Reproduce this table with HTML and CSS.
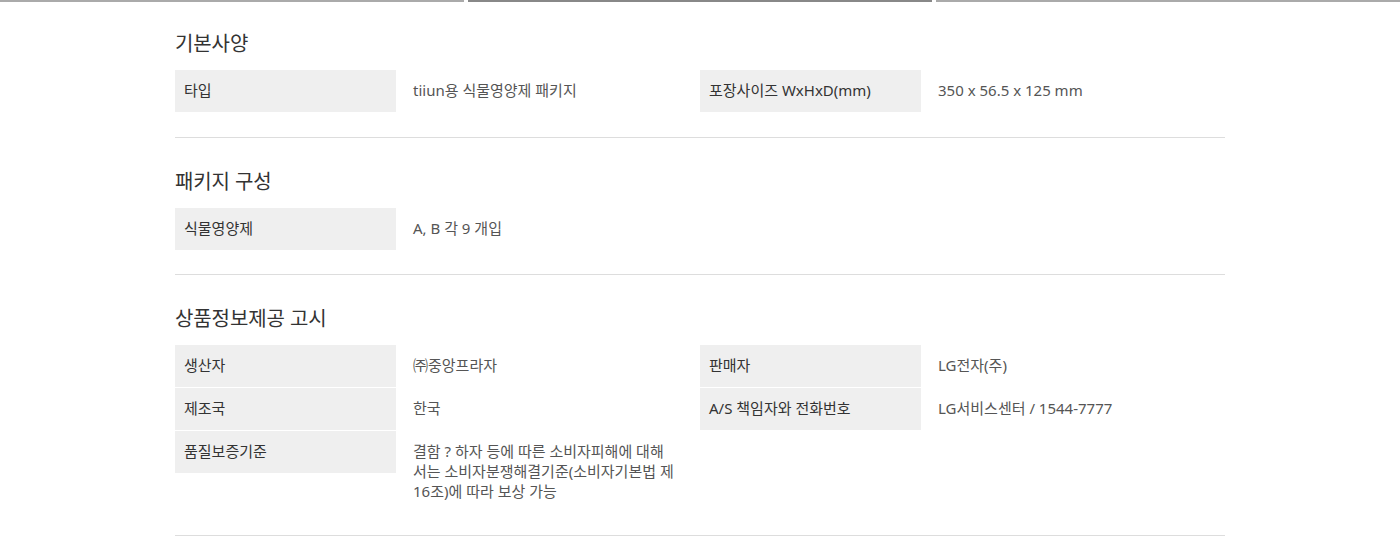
FILE: index.html
```html
<!DOCTYPE html>
<html lang="ko">
<head>
    <meta charset="UTF-8">
    <meta name="viewport" content="width=device-width, initial-scale=1.0">
    <title>tiiun 식물영양제 패키지 - 스펙</title>
    <link rel="stylesheet" href="styles.css">
</head>
<body>
    <!-- Tab indicator bar -->
    <div class="tab-bar">
        <span class="tab"></span>
        <span class="tab active"></span>
        <span class="tab"></span>
    </div>

    <div class="spec">
        <!-- 기본사양 -->
        <section class="spec-section first">
            <h2>기본사양</h2>
            <div class="spec-row">
                <div class="label">타입</div>
                <div class="value">tiiun용 식물영양제 패키지</div>
                <div class="label">포장사이즈 WxHxD(mm)</div>
                <div class="value">350 x 56.5 x 125 mm</div>
            </div>
        </section>

        <!-- 패키지 구성 -->
        <section class="spec-section">
            <h2>패키지 구성</h2>
            <div class="spec-row">
                <div class="label">식물영양제</div>
                <div class="value">A, B 각 9 개입</div>
            </div>
        </section>

        <!-- 상품정보제공 고시 -->
        <section class="spec-section">
            <h2>상품정보제공 고시</h2>
            <div class="spec-row">
                <div class="label">생산자</div>
                <div class="value">㈜중앙프라자</div>
                <div class="label">판매자</div>
                <div class="value">LG전자(주)</div>
            </div>
            <div class="spec-row">
                <div class="label">제조국</div>
                <div class="value">한국</div>
                <div class="label">A/S 책임자와 전화번호</div>
                <div class="value">LG서비스센터 / 1544-7777</div>
            </div>
            <div class="spec-row">
                <div class="label">품질보증기준</div>
                <div class="value">결함 ? 하자 등에 따른 소비자피해에 대해<br>서는 소비자분쟁해결기준(소비자기본법 제<br>16조)에 따라 보상 가능</div>
            </div>
        </section>
    </div>
</body>
</html>
```

FILE: styles.css
```css
body {
    margin: 0;
    padding: 0;
    background: #fff;
    font-family: "Noto Sans", "Noto Sans CJK KR", sans-serif;
    color: #333;
}
.tab-bar {
    display: flex;
    gap: 4px;
    height: 2px;
}
.tab {
    flex: 1;
    background: #aaa;
}
.tab.active {
    background: #888;
}
.spec {
    width: 1050px;
    margin: 0 auto;
}
.spec-section {
    padding: 30px 0 24px;
    border-bottom: 1px solid #ddd;
}
.spec-section.first {
    padding-top: 28px;
    padding-bottom: 25px;
}
.spec-section h2 {
    margin: 0 0 14px;
    font-size: 20px;
    line-height: 24px;
    padding-top: 2px;
    font-weight: normal;
    letter-spacing: -0.1px;
    color: #333;
}
.spec-row {
    display: grid;
    grid-template-columns: 221px 304px 221px 304px;
    align-items: start;
}
.spec-row + .spec-row {
    border-top: 1px solid #fff;
}
.spec-row .label,
.spec-row .value {
    font-size: 15px;
    line-height: 20px;
}
.spec-row .label {
    height: 20px;
    padding: 10px 9px 12px;
    background: #efefef;
    color: #333;
}
.spec-row .value {
    padding: 10px 15px 10px 17px;
    color: #555;
}
```
